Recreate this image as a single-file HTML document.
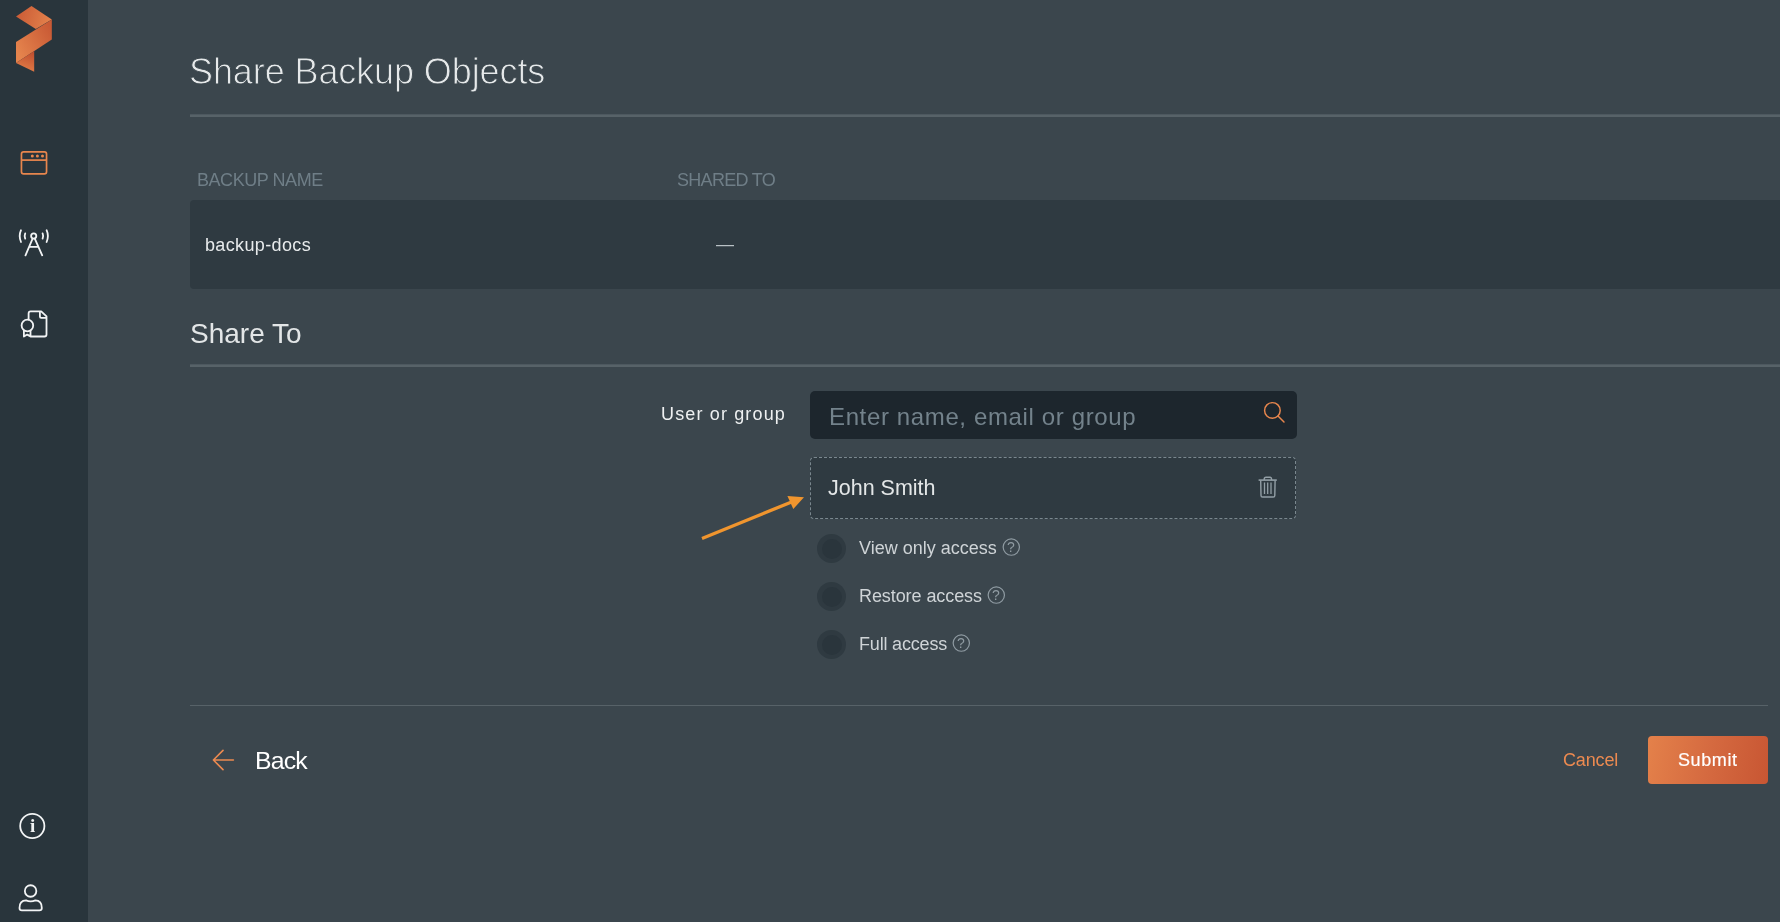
<!DOCTYPE html>
<html lang="en">
<head>
<meta charset="utf-8">
<title>Share Backup Objects</title>
<style>
*{box-sizing:border-box;margin:0;padding:0}
html,body{width:1780px;height:922px;overflow:hidden;background:#3b464d}
body{font-family:"Liberation Sans",sans-serif;color:#e6e9ea;position:relative}
.abs{position:absolute;white-space:nowrap;line-height:1;will-change:transform}
#side{position:absolute;left:0;top:0;width:88px;height:922px;background:#29353c}
#side svg{position:absolute;left:0;top:0}
.hr{position:absolute;background:#576268}
.hr3{background:linear-gradient(#4d585f 0,#4d585f 1px,#576268 1px,#576268 3px)}
#row{position:absolute;left:190px;top:200px;width:1600px;height:89px;background:#2f3a41;border-radius:4px 0 0 4px}
#inp{position:absolute;left:810px;top:391px;width:487px;height:48px;background:#1d262d;border-radius:5px}
#sel{position:absolute;left:810px;top:457px;width:486px;height:62px;background:#2f3a41;border:1px dashed #7a878e;border-radius:4px}
.radio{position:absolute;left:817px;width:29px;height:29px;border-radius:50%;background:#2f3a41}
.radio:after{content:"";position:absolute;left:4.5px;top:4.6px;width:20px;height:20px;border-radius:50%;background:#2a353c}
#submit{position:absolute;left:1648px;top:736px;width:120px;height:48px;border-radius:4px;background:linear-gradient(100deg,#e4814a 0%,#d56a40 50%,#c85633 100%)}
#ov{position:absolute;left:0;top:0;pointer-events:none}
</style>
</head>
<body>
<div id="side">
<svg width="88" height="922" viewBox="0 0 88 922" fill="none">
<defs>
<linearGradient id="g1" x1="16" y1="12" x2="52" y2="24" gradientUnits="userSpaceOnUse"><stop offset="0" stop-color="#c95a35"/><stop offset="1" stop-color="#e5844d"/></linearGradient>
<linearGradient id="g2" x1="16" y1="50" x2="52" y2="30" gradientUnits="userSpaceOnUse"><stop offset="0" stop-color="#e5844d"/><stop offset="1" stop-color="#c95a35"/></linearGradient>
<linearGradient id="g3" x1="30" y1="52" x2="24" y2="70" gradientUnits="userSpaceOnUse"><stop offset="0" stop-color="#c05030"/><stop offset="1" stop-color="#e07a45"/></linearGradient>
</defs>
<!-- logo -->
<path d="M31.5 6 L51.8 19.5 L35.8 29 L16 16.5 Z" fill="url(#g1)"/>
<path d="M51.8 19.5 L51.8 39.6 L16 63 L16 42 Z" fill="url(#g2)"/>
<path d="M34.2 51 L34.2 71.8 L16 63 Z" fill="url(#g3)"/>
<!-- icon 1: window -->
<g stroke="#e8864d" stroke-width="1.7">
<rect x="21.45" y="151.95" width="25.1" height="21.9" rx="2.2"/>
<path d="M21.6 160.1 H46.4"/>
</g>
<g fill="#e8864d"><circle cx="32.3" cy="156" r="1.5"/><circle cx="37.4" cy="156" r="1.5"/><circle cx="42.5" cy="156" r="1.5"/></g>
<!-- icon 2: antenna -->
<g stroke="#f2f4f5" stroke-width="1.8" stroke-linecap="round">
<circle cx="33.7" cy="236" r="2.6"/>
<path d="M32.6 238.6 L25.5 255.3 M34.8 238.6 L42.2 255.3 M29.6 246.8 H38"/>
<path d="M21 230.2 Q18.4 236 21 242 M46.6 230.2 Q49.2 236 46.6 242 M25.2 233.4 Q24.1 236 25.2 238.6 M42.6 233.4 Q43.7 236 42.6 238.6"/>
</g>
<!-- icon 3: certificate doc -->
<g stroke="#f2f4f5" stroke-width="1.8" stroke-linejoin="round" stroke-linecap="round">
<path d="M28.6 319.6 V313.4 Q28.6 311.4 30.6 311.4 H41.2 L46.5 316.4 V334.5 Q46.5 336.5 44.5 336.5 H31"/>
<path d="M39.9 311.8 V316.6 Q39.9 317.9 41.2 317.9 H46.2"/>
<circle cx="27.4" cy="325.5" r="5.8"/>
<path d="M23.9 330.6 V336.6 L27.2 334.6 L30.5 336.4 V330.6"/>
</g>
<!-- info -->
<circle cx="32.3" cy="826" r="12.1" stroke="#f2f4f5" stroke-width="1.8"/>
<!-- user -->
<g stroke="#f2f4f5" stroke-width="1.8">
<circle cx="30.6" cy="891" r="5.75"/>
<path d="M19.5 908 Q19.5 900.4 26 900.4 Q30.6 902.4 35.4 900.4 Q41.8 900.4 41.8 908 Q41.8 910.4 39.4 910.4 H21.9 Q19.5 910.4 19.5 908 Z"/>
</g>
</svg>
<div class="abs" id="infoi" style="left:29.7px;top:816.3px;font-family:'Liberation Serif',serif;font-weight:bold;font-size:19px;color:#f2f4f5">i</div>
</div>

<div class="abs" id="t_title" style="left:188.8px;top:54px;font-size:36px;color:#e6e9ea;letter-spacing:-0.1px;-webkit-text-stroke:.9px #3b464d">Share Backup Objects</div>
<div class="hr hr3" style="left:190px;top:114px;width:1590px;height:3px"></div>

<div class="abs" id="t_h1" style="left:197px;top:171px;font-size:18px;color:#6f7e87;letter-spacing:-0.45px">BACKUP NAME</div>
<div class="abs" id="t_h2" style="left:677px;top:171px;font-size:18px;color:#6f7e87;letter-spacing:-0.7px">SHARED TO</div>
<div id="row"></div>
<div class="abs" id="t_bk" style="left:205px;top:236px;font-size:18px;color:#e8ebec;letter-spacing:.36px">backup-docs</div>
<div class="abs" id="t_dash" style="left:716px;top:235px;font-size:18px;color:#b9c1c5">—</div>

<div class="abs" id="t_share" style="left:190px;top:320px;font-size:28px;color:#e3e6e7">Share To</div>
<div class="hr hr3" style="left:190px;top:364px;width:1590px;height:3px"></div>

<div class="abs" id="t_user" style="left:661px;top:405px;font-size:18px;color:#eef0f1;letter-spacing:1.15px">User or group</div>
<div id="inp"></div>
<div class="abs" id="t_ph" style="left:829px;top:405px;font-size:24px;color:#73828b;letter-spacing:.63px">Enter name, email or group</div>
<div id="sel"></div>
<div class="abs" id="t_john" style="left:828px;top:478px;font-size:21.5px;color:#e3e6e7">John Smith</div>

<div class="radio" style="top:534px"></div>
<div class="radio" style="top:582px"></div>
<div class="radio" style="top:630px"></div>
<div class="abs" id="t_r1" style="left:859px;top:539px;font-size:18px;color:#cfd4d7">View only access</div>
<div class="abs" id="t_r2" style="left:859px;top:587px;font-size:18px;color:#cfd4d7;letter-spacing:-.08px">Restore access</div>
<div class="abs" id="t_r3" style="left:859px;top:635px;font-size:18px;color:#cfd4d7;letter-spacing:-.18px">Full access</div>
<div class="abs" id="t_q1" style="left:1007.4px;top:540.4px;font-size:14px;color:#8f9ba2">?</div>
<div class="abs" id="t_q2" style="left:992.4px;top:588.4px;font-size:14px;color:#8f9ba2">?</div>
<div class="abs" id="t_q3" style="left:957.4px;top:636.4px;font-size:14px;color:#8f9ba2">?</div>

<div class="hr" style="left:190px;top:705px;width:1578px;height:1px"></div>
<div class="abs" id="t_back" style="left:255px;top:749px;font-size:24.8px;color:#ffffff;letter-spacing:-.8px">Back</div>
<div class="abs" id="t_cancel" style="left:1563px;top:751px;font-size:18px;color:#ec8a50;letter-spacing:-.15px">Cancel</div>
<div id="submit"></div>
<div class="abs" id="t_submit" style="left:1678px;top:751px;font-size:18px;color:#ffffff;letter-spacing:.6px;-webkit-text-stroke:.18px #fff">Submit</div>

<svg id="ov" width="1780" height="922" viewBox="0 0 1780 922" fill="none">
<!-- search -->
<g stroke="#e8864d" stroke-width="1.45" stroke-linecap="round"><circle cx="1272.4" cy="410.4" r="7.8"/><path d="M1278 416 L1284 422"/></g>
<!-- trash -->
<g stroke="#939fa6" stroke-width="1.4" stroke-linejoin="round">
<path d="M1258.6 480.1 H1276.8" stroke-width="1.6"/>
<path d="M1264.2 480 V479 Q1264.2 477.2 1266 477.2 H1269.8 Q1271.6 477.2 1271.6 479 V480"/>
<path d="M1260.7 480.6 L1261 495.4 Q1261 497 1262.6 497 H1273.2 Q1274.8 497 1274.8 495.4 L1275.1 480.6"/>
<path d="M1264.5 482.6 V494 M1267.7 482.6 V494 M1271 482.6 V494" stroke-width="1.3"/>
</g>
<!-- help circles -->
<g stroke="#8f9ba2" stroke-width="1.2"><circle cx="1011.3" cy="547.1" r="8.15"/><circle cx="996.3" cy="595.1" r="8.15"/><circle cx="961.3" cy="643.1" r="8.15"/></g>
<!-- orange annotation arrow -->
<path d="M702.6 539.9 L701.4 536.9 L789.7 500.9 L787.4 495.9 L804 497.3 L793.3 509 L791 504 Z" fill="#f0952e"/>
<!-- back arrow -->
<g stroke="#ec8a50" stroke-width="1.6" stroke-linecap="round" stroke-linejoin="round"><path d="M233.4 760 H213.4 M223 750.4 L213.4 760 L223 769.6"/></g>
</svg>
</body>
</html>
